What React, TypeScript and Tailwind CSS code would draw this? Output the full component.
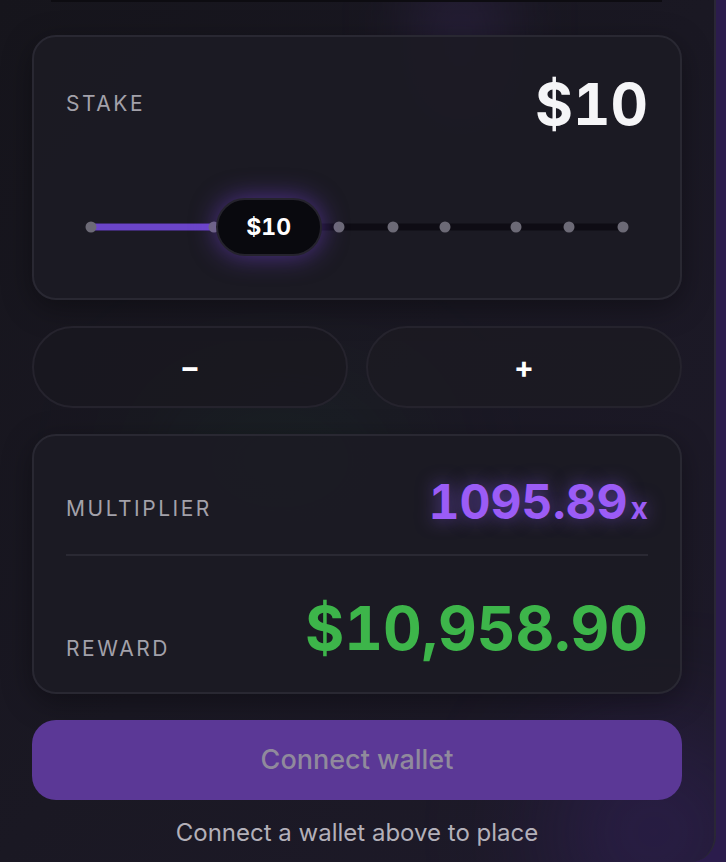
import React from 'react';

const dots = [0, 23.1, 46.6, 56.7, 66.6, 79.8, 89.9, 100];

const StakeSlider = ({ value }: { value: number }) => {
  return (
    <div className="relative mx-[57px] h-[58px]">
      {/* track */}
      <div className="absolute left-0 right-0 top-1/2 h-[7px] -translate-y-1/2 rounded-full bg-[#0e0c14]" />
      <div
        className="absolute left-0 top-1/2 h-[7px] -translate-y-1/2 rounded-full bg-[#6b45c9]"
        style={{ width: `${value}%` }}
      />
      {dots.map((d) => (
        <div
          key={d}
          className="absolute top-1/2 h-[11px] w-[11px] -translate-x-1/2 -translate-y-1/2 rounded-full bg-[#6c6a76]"
          style={{ left: `${d}%` }}
        />
      ))}
      {/* thumb */}
      <div
        className="absolute top-0 flex h-[58px] w-[106px] -translate-x-1/2 items-center justify-center rounded-full border-2 border-[#25232d] bg-[#09090e] shadow-[0_0_26px_rgba(124,70,230,0.55)]"
        style={{ left: `${value}%` }}
      >
        <span className="text-[23px] font-bold tabular-nums text-white">$10</span>
      </div>
    </div>
  );
};

export default function App() {
  return (
    <div
      className="relative h-[862px] w-[726px] overflow-hidden bg-[#2b1c4c]"
      style={{ fontFamily: 'Inter, "Noto Sans", sans-serif' }}
    >
      {/* outer panel */}
      <div className="relative h-full w-[716px] overflow-hidden rounded-br-[26px] border-r-2 border-[#2a2736] bg-gradient-to-br from-[#16151c] via-[#1a1823] to-[#1e1a2a]">
        {/* decorative blurs */}
        <div className="pointer-events-none absolute left-[430px] top-[-40px] h-[160px] w-[60px] rounded-full bg-[#3a2a5a] opacity-60 blur-2xl" />
        <div className="pointer-events-none absolute left-[150px] top-[390px] h-[140px] w-[260px] rounded-full bg-[#1d3a2a] opacity-30 blur-3xl" />
        <div className="pointer-events-none absolute bottom-[-60px] right-[-40px] h-[180px] w-[200px] rounded-full bg-[#3b2470] opacity-50 blur-3xl" />
        <div className="absolute left-[51px] top-0 h-[2px] w-[611px] bg-[#0d0c11]" />

        <div className="relative flex flex-col gap-[26px] px-[32px] pt-[35px]">
          {/* stake card */}
          <div className="h-[265px] rounded-[24px] border-2 border-[#292832] bg-[#1c1b24]/90 shadow-[0_8px_30px_rgba(0,0,0,0.35)]">
            <div className="flex items-center justify-between px-[32px] pt-[38px]">
              <span className="text-[21px] tracking-[0.12em] text-[#a3a1aa]">STAKE</span>
              <span className="text-[58px] font-bold leading-none tabular-nums text-[#f5f5f7]">$10</span>
            </div>
            <div className="mt-[65px]">
              <StakeSlider value={33.4} />
            </div>
          </div>

          {/* +/- buttons */}
          <div className="grid grid-cols-2 gap-[18px]">
            <button className="flex h-[82px] items-center justify-center rounded-full border-2 border-[#25232d] bg-[#19181f]/80 text-[30px] font-bold leading-none text-white">
              −
            </button>
            <button className="flex h-[82px] items-center justify-center rounded-full border-2 border-[#25232d] bg-[#1b1a22]/80 text-[30px] font-bold leading-none text-white">
              +
            </button>
          </div>

          {/* multiplier / reward card */}
          <div className="h-[260px] rounded-[24px] border-2 border-[#292832] bg-[#1c1b24]/90 px-[32px] shadow-[0_8px_30px_rgba(0,0,0,0.35)]">
            <div className="flex h-[120px] items-end justify-between border-b-2 border-[#2a2933] pb-[28px]">
              <span className="mb-[2px] text-[21px] tracking-[0.12em] text-[#a3a1aa]">MULTIPLIER</span>
              <span className="flex items-baseline font-bold leading-none tabular-nums text-[#9b5cf6] [text-shadow:0_0_18px_rgba(139,92,246,0.55)]">
                <span className="text-[48px]">1095.89</span>
                <span className="ml-[3px] text-[30px]">x</span>
              </span>
            </div>
            <div className="flex items-end justify-between pt-[42px]">
              <span className="-mb-[6px] text-[21px] tracking-[0.12em] text-[#a3a1aa]">REWARD</span>
              <span className="text-[60px] font-bold leading-none tabular-nums text-[#3db54a]">$10,958.90</span>
            </div>
          </div>

          {/* connect wallet */}
          <div className="flex flex-col items-center">
            <button className="flex h-[80px] w-full items-center justify-center rounded-[24px] bg-[#5b3896] text-[27px] font-medium text-[#908a9c]">
              Connect wallet
            </button>
            <p className="mt-[15px] text-[24px] text-[#b3b0b9]">Connect a wallet above to place</p>
          </div>
        </div>
      </div>
    </div>
  );
}
